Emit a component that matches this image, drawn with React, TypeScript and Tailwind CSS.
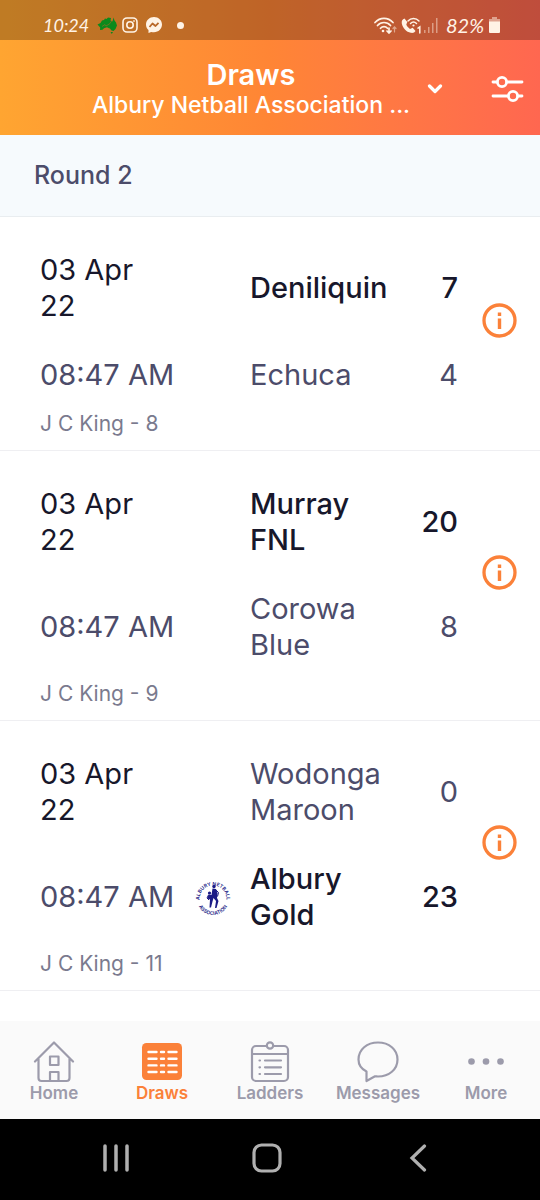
import type { ReactNode } from 'react';

interface Team {
  name: string;
  score: number;
  hasLogo?: boolean;
}

interface Match {
  id: number;
  date: string;
  time: string;
  venue: string;
  home: Team;
  away: Team;
}

const matches: Match[] = [
  {
    id: 1,
    date: '03 Apr 22',
    time: '08:47 AM',
    venue: 'J C King - 8',
    home: { name: 'Deniliquin', score: 7 },
    away: { name: 'Echuca', score: 4 },
  },
  {
    id: 2,
    date: '03 Apr 22',
    time: '08:47 AM',
    venue: 'J C King - 9',
    home: { name: 'Murray FNL', score: 20 },
    away: { name: 'Corowa Blue', score: 8 },
  },
  {
    id: 3,
    date: '03 Apr 22',
    time: '08:47 AM',
    venue: 'J C King - 11',
    home: { name: 'Wodonga Maroon', score: 0 },
    away: { name: 'Albury Gold', score: 23, hasLogo: true },
  },
];

const StatusBar = () => (
  <div className="flex h-10 items-center justify-between bg-black/25 pl-[43px] pr-10 pt-2.5 font-['Lato',sans-serif] text-xl leading-none text-[#fff3e6]">
    <div className="flex items-center">
      <span className="w-[54px] text-lg italic leading-none">10:24</span>
      {/* Australia */}
      <svg width="20" height="17" viewBox="0 0 20 17" fill="#0b8a1c">
        <path d="M.5 7.500l3-1.500 1.500-2.500 2-.5 1-1.500 1.500.5L11 .5l3 .5-.5 2.500 2 1L16.500.5l1 3 1.500 2 1 3-1.500 3.500-2 2-2-.5-1.500-2-1-.2-2-1-3 1-1.500 1.500-2.500.2.2-2.500zM13.500 15h2.500l-1.200 2z" />
        <path d="M5 9.500l3-2 1 1.500 4-2.500 1.500-2.500" fill="none" stroke="#7b7422" strokeWidth=".8" />
      </svg>
      {/* Instagram */}
      <svg className="ml-[5px]" width="16" height="16" viewBox="0 0 16 16" fill="none" stroke="currentColor" strokeWidth="1.600">
        <rect x="1" y="1" width="14" height="14" rx="4" />
        <circle cx="8" cy="8" r="3.200" />
        <circle cx="12" cy="4" r=".6" fill="currentColor" strokeWidth=".6" />
      </svg>
      {/* Messenger */}
      <svg className="ml-2" width="16" height="16" viewBox="0 0 16 16">
        <path d="M8 0C3.500 0 0 3.300 0 7.600c0 2.300 1 4.200 2.500 5.500V16l2.700-1.100c.9.200 1.800.4 2.800.4 4.500 0 8-3.300 8-7.700S12.500 0 8 0z" fill="currentColor" />
        <path d="M3.500 10l3-3.500 3 2.500 3-3.200" fill="none" stroke="#b96829" strokeWidth="1.800" strokeLinejoin="round" />
      </svg>
      <span className="ml-[15px] size-[7px] rounded-full bg-[#fff3e6]" />
    </div>
    <div className="flex items-center">
      {/* Wi-Fi */}
      <svg width="23" height="17" viewBox="0 0 23 17" fill="none" stroke="currentColor" strokeWidth="1.700" strokeLinecap="round">
        <path d="M1 5.500c5-5.500 13-5.500 18 0M3.500 8.500c3.500-4 9.500-4 13 0M6.500 11.300c2-2.200 5-2.200 7 0" />
        <circle cx="9" cy="14" r="1.300" fill="currentColor" stroke="none" />
        <path d="M15 11v4.500M13 14l2 2 2-2" />
        <path d="M20.500 15V10M19 11.500l1.500-1.700 1.500 1.700" opacity=".5" strokeWidth="1.200" />
      </svg>
      {/* Wi-Fi calling */}
      <svg className="ml-1" width="21" height="17" viewBox="0 0 21 17" fill="none" stroke="currentColor" strokeWidth="1.500" strokeLinecap="round">
        <path d="M3.500 1.500C1.500 2 .3 4 .8 6.500c1 4.500 4.500 8.500 9 9.300 2.200.4 3.800-.3 4.700-1.800l-2.800-3.300-2.700 1.200C7.500 11 6 9.500 5.300 7.500l1-2.500z" fill="currentColor" stroke="none" />
        <path d="M7 4c3-3.500 8-3.500 11 0M9.500 6.500c2-2 4-2 6 0" />
        <circle cx="12.500" cy="8.500" r="1.100" fill="currentColor" stroke="none" />
        <path d="M17 11.200l1.800-1.200v6" />
      </svg>
      {/* Signal */}
      <svg className="ml-0.5" width="14" height="15" viewBox="0 0 14 15" fill="currentColor" opacity=".45">
        <path d="M0 12h1.500v3H0zM4 9h1.500v6H4zM8 5h1.500v10H8zM12 0h1.500v15H12z" />
      </svg>
      <span className="ml-2 w-[40px] italic">82%</span>
      {/* Battery */}
      <svg className="ml-[3px]" width="11" height="16" viewBox="0 0 11 16" fill="currentColor">
        <path d="M3 0h5v2h3v3H0V2h3z" opacity=".5" />
        <path d="M0 4.500h11V15a1 1 0 0 1-1 1H1a1 1 0 0 1-1-1z" />
      </svg>
    </div>
  </div>
);

const Header = () => (
  <header className="bg-linear-to-r from-[#ffa531] via-[#ff8535] to-[#ff6750] text-white">
    <StatusBar />
    <div className="flex items-center pb-4 pl-[82px] pr-4 pt-[19px]">
      <button type="button" className="flex min-w-0 flex-1 items-center">
        <span className="min-w-0 flex-1 text-center">
          <span className="block text-[29px] font-semibold leading-8">Draws</span>
          <span className="block truncate text-[23px] font-medium leading-7">Albury Netball Association ...</span>
        </span>
        <svg className="ml-[7px] shrink-0" width="16" height="10" viewBox="0 0 16 10" fill="none" stroke="white" strokeWidth="3.200" strokeLinecap="round" strokeLinejoin="round">
          <path d="M2.500 2L8 7.500 13.500 2" />
        </svg>
      </button>
      <button type="button" aria-label="Filter" className="ml-12">
        <svg width="33" height="28" viewBox="0 0 33 28" fill="none" stroke="white" strokeWidth="2.800" strokeLinecap="round">
          <path d="M2 7h4M16 7h15M2 21h15M27 21h4" />
          <circle cx="11" cy="7" r="4.600" />
          <circle cx="22" cy="21" r="4.600" />
        </svg>
      </button>
    </div>
  </header>
);

const ClubLogo = () => (
  <svg width="36" height="36" viewBox="0 0 36 36" fill="#1b1b86" role="img" aria-label="Club logo">
    <path id="top-arc" d="M4.500 20a13.500 13.500 0 1 1 27 0" fill="none" />
    <path id="bottom-arc" d="M2 20a16 16 0 0 0 32 0" fill="none" />
    <text fontSize="5" fontWeight="600" textAnchor="middle">
      <textPath href="#top-arc" startOffset="50%">ALBURY NETBALL</textPath>
    </text>
    <text fontSize="5" fontWeight="600" textAnchor="middle">
      <textPath href="#bottom-arc" startOffset="50%">ASSOCIATION</textPath>
    </text>
    <circle cx="19" cy="7.500" r="1.700" />
    <circle cx="14.500" cy="14" r="1.600" />
    <path d="M17.500 9.500l3.500.5 1.500 4-.5 5 1.500 3-2 7h-1.500l1-7-2.500-3-1 3.500-1.500 6h-1.500l.5-8-2.500-1 1-4 3 .5z" />
    <path d="M20 10l3.500 3.500-1 4M13.500 16l-1.500 3 2 2" fill="none" stroke="#1b1b86" />
  </svg>
);

const TeamRow = ({ left, team, isWinner }: { left: ReactNode; team: Team; isWinner: boolean }) => {
  const color = isWinner ? 'font-medium text-[#17172b]' : 'text-[#4c4c6a]';

  return (
    <div className="flex items-center">
      {left}
      <div className="w-9 shrink-0">{team.hasLogo && <ClubLogo />}</div>
      <div className={`ml-[19px] w-36 ${color}`}>{team.name}</div>
      <div className={`flex-1 text-right ${color}`}>{team.score}</div>
    </div>
  );
};

const MatchCard = ({ match }: { match: Match }) => {
  const homeWins = match.home.score > match.away.score;

  return (
    <li className="border-b border-[#efeff2] pb-3 pl-10 pr-[23px] pt-[35px]">
      <div className="flex items-center">
        <div className="flex flex-1 flex-col gap-[33px] text-[29px] leading-9">
          <TeamRow
            left={
              <div className="w-[155px] shrink-0 pr-10 text-[#17172b]">{match.date}</div>
            }
            team={match.home}
            isWinner={homeWins}
          />
          <TeamRow
            left={
              <div className="w-[155px] shrink-0 whitespace-nowrap text-[#4c4c6a]">{match.time}</div>
            }
            team={match.away}
            isWinner={!homeWins}
          />
        </div>
        <button type="button" aria-label="Match details" className="mb-1 ml-6 shrink-0">
          <svg width="35" height="35" viewBox="0 0 35 35" fill="none" stroke="#fb8139" strokeWidth="3.300">
            <circle cx="17.500" cy="17.500" r="15.500" />
            <path d="M17.500 15.500v10.500M17.500 9.500v3.500" strokeWidth="3.400" />
          </svg>
        </button>
      </div>
      <p className="mt-[17px] text-[21px] leading-7 text-[#7a7a8e]">{match.venue}</p>
    </li>
  );
};

const HomeIcon = () => (
  <svg width="42" height="42" viewBox="0 0 42 42" fill="none" stroke="currentColor" strokeWidth="2.200" strokeLinecap="round" strokeLinejoin="round">
    <path d="M2 20.500L21 1.500l19 19M5.500 18v19a3 3 0 0 0 3 3h25a3 3 0 0 0 3-3V18" />
    <path d="M17 15.500h8.500V24H17zM17 40v-9h8.500v9" />
  </svg>
);

const DrawsIcon = () => (
  <svg width="42" height="42" viewBox="0 0 42 42">
    <rect x="1" y="2" width="40" height="37" rx="4.500" fill="currentColor" />
    <path
      d="M7.500 11h8M20 11h3M27.500 11h8M7.500 17.700h8M20 17.700h3M27.500 17.700h8M7.500 24.400h8M20 24.400h3M27.500 24.400h8M7.500 31h8M20 31h3M27.500 31h8"
      stroke="white"
      strokeWidth="2.400"
      strokeLinecap="round"
    />
  </svg>
);

const LaddersIcon = () => (
  <svg width="42" height="42" viewBox="0 0 42 42" fill="none" stroke="currentColor" strokeWidth="2.200" strokeLinecap="round" strokeLinejoin="round">
    <path d="M17.500 5H7a4 4 0 0 0-4 4V36a4 4 0 0 0 4 4h28a4 4 0 0 0 4-4V9a4 4 0 0 0-4-4H24.500M3 13h36" />
    <circle cx="21" cy="4.500" r="3.200" />
    <path d="M10.500 19.500h.5M16 19.500h16M10.500 26.300h.5M16 26.300h16M10.500 33h.5M16 33h16" />
  </svg>
);

const MessagesIcon = () => (
  <svg width="42" height="42" viewBox="0 0 42 42" fill="none" stroke="currentColor" strokeWidth="2.200" strokeLinejoin="round">
    <path d="M9.500 30.500C4.500 28 1.500 24 1.500 18.500 1.500 8.500 10 1.500 21 1.500s19.500 7 19.500 17-8.500 17-19.500 17c-1 0-2-.2-3-.2L9.500 40z" />
  </svg>
);

const MoreIcon = () => (
  <svg width="42" height="42" viewBox="0 0 42 42" fill="currentColor">
    <circle cx="6.500" cy="20.500" r="3.300" />
    <circle cx="21" cy="20.500" r="3.300" />
    <circle cx="35.500" cy="20.500" r="3.300" />
  </svg>
);

const tabs = [
  { label: 'Home', icon: <HomeIcon /> },
  { label: 'Draws', icon: <DrawsIcon /> },
  { label: 'Ladders', icon: <LaddersIcon /> },
  { label: 'Messages', icon: <MessagesIcon /> },
  { label: 'More', icon: <MoreIcon /> },
];

const TabBar = () => (
  <nav className="grid grid-cols-5 bg-[#fafafa] pb-4 pt-5">
    {tabs.map((tab) => (
      <a
        key={tab.label}
        href="#"
        aria-current={tab.label === 'Draws' ? 'page' : undefined}
        className={`flex flex-col items-center text-[17px] font-semibold leading-5 ${
          tab.label === 'Draws' ? 'text-[#fb8139]' : 'text-[#9c9bab]'
        }`}
      >
        {tab.icon}
        {tab.label}
      </a>
    ))}
  </nav>
);

const SystemBar = () => (
  <div className="flex h-[81px] items-center justify-between bg-black pb-1 pl-[102px] pr-[108px]">
    <button type="button" aria-label="Recent apps">
      <svg width="28" height="28" viewBox="0 0 28 28" stroke="#b0b0b0" strokeWidth="3.500" strokeLinecap="round">
        <path d="M3 2v24M14 2v24M25 2v24" />
      </svg>
    </button>
    <button type="button" aria-label="Home screen">
      <svg width="30" height="30" viewBox="0 0 30 30" fill="none" stroke="#b0b0b0" strokeWidth="3.200">
        <rect x="2" y="2" width="26" height="26" rx="7.500" />
      </svg>
    </button>
    <button type="button" aria-label="Back">
      <svg width="28" height="28" viewBox="0 0 28 28" fill="none" stroke="#b0b0b0" strokeWidth="3.200" strokeLinecap="round">
        <path d="M20.500 2L8 14l12.500 12" />
      </svg>
    </button>
  </div>
);

const App = () => {
  return (
    <div className="flex min-h-screen flex-col bg-white font-['Inter',sans-serif]">
      <Header />
      <main className="flex-1">
        <h2 className="border-b border-[#e9edf0] bg-[#f6fafd] px-[34px] pb-[25px] pt-6 text-[25px] font-medium leading-8 text-[#4c4c6a]">
          Round 2
        </h2>
        <ul>
          {matches.map((match) => (
            <MatchCard key={match.id} match={match} />
          ))}
        </ul>
      </main>
      <TabBar />
      <SystemBar />
    </div>
  );
};

export default App;
